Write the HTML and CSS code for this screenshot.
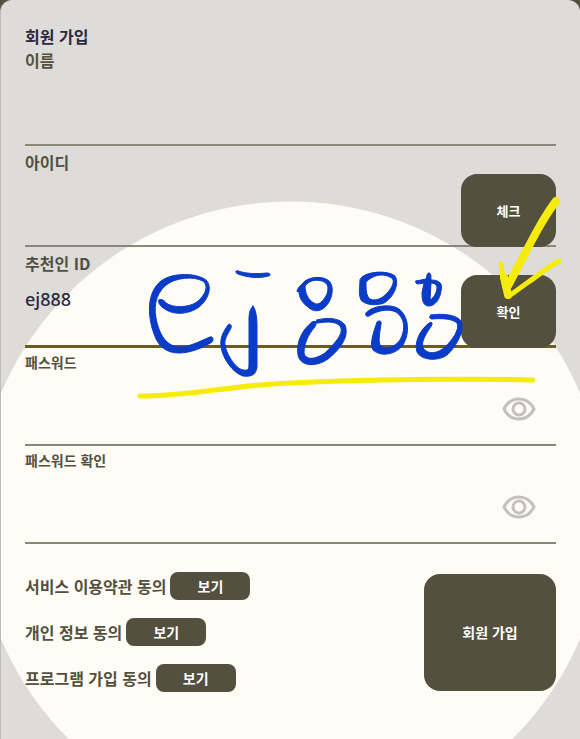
FILE: index.html
```
<!DOCTYPE html>
<html lang="ko">
<head>
  <meta charset="UTF-8">
  <meta name="viewport" content="width=device-width, initial-scale=1.0">
  <title>회원 가입</title>
  <link rel="stylesheet" href="styles.css">
</head>
<body>

<main class="signup">
  <form class="signup-form">
    <h1>회원 가입</h1>

    <div class="field">
      <label for="name">이름</label>
      <div class="control">
        <input type="text" id="name" name="name">
      </div>
    </div>

    <div class="field spaced">
      <label for="userId">아이디</label>
      <div class="control">
        <input type="text" id="userId" name="userId">
        <button type="button" class="check-btn">체크</button>
      </div>
    </div>

    <div class="field spaced active">
      <label for="referrer">추천인 ID</label>
      <div class="control">
        <input type="text" id="referrer" name="referrer" value="ej888">
        <button type="button" class="check-btn">확인</button>
      </div>
    </div>

    <div class="field small">
      <label for="password">패스워드</label>
      <div class="control">
        <input type="password" id="password" name="password">
        <button type="button" class="eye-btn" aria-label="패스워드 보기">
          <svg viewBox="0 0 34 24">
            <path d="M2 12C5 6 10 2 17 2s12 4 15 10c-3 6-8 10-15 10S5 18 2 12z"/>
            <circle cx="17" cy="12" r="6"/>
          </svg>
        </button>
      </div>
    </div>

    <div class="field small">
      <label for="passwordConfirm">패스워드 확인</label>
      <div class="control">
        <input type="password" id="passwordConfirm" name="passwordConfirm">
        <button type="button" class="eye-btn" aria-label="패스워드 확인 보기">
          <svg viewBox="0 0 34 24">
            <path d="M2 12C5 6 10 2 17 2s12 4 15 10c-3 6-8 10-15 10S5 18 2 12z"/>
            <circle cx="17" cy="12" r="6"/>
          </svg>
        </button>
      </div>
    </div>

    <div class="form-footer">
      <ul class="terms">
        <li><span>서비스 이용약관 동의</span><button type="button" class="view-btn">보기</button></li>
        <li><span>개인 정보 동의</span><button type="button" class="view-btn">보기</button></li>
        <li><span>프로그램 가입 동의</span><button type="button" class="view-btn">보기</button></li>
      </ul>
      <button type="submit" class="submit-btn">회원 가입</button>
    </div>
  </form>

  <!-- pen marks over the form -->
  <svg class="ink" viewBox="1 0 579 739" aria-hidden="true">
    <g class="blue">
      <path d="M159 300C161 298 165 301 166 303C173 308 188 308 197 302C204 296 208 289 205 283C200 277 181 276 169 283C158 290 153 303 156 318C159 334 166 346 179 347C190 347 200 341 210 337C213 336 214 340 212 342C203 348 190 353 179 353C166 353 158 346 154 334C147 315 147 292 161 281C173 272 197 273 206 280C213 287 208 300 199 307C188 315 171 316 161 306C159 304 158 302 159 300Z"/>
      <path d="M238 271C247 274 257 274 267 273C271 273 271 276 268 276C258 279 246 277 238 274C235 273 235 270 238 271Z"/>
      <path d="M253 306C256 310 257 318 257 326L257 367C256 375 251 377 243 376C233 373 222 358 221 346C220 338 223 332 228 325C230 323 232 325 231 328C228 334 224 339 225 345C227 356 237 370 244 370C249 371 249 368 249 362L249 318C249 312 251 308 253 306Z"/>
      <path d="M297 291C298 287 302 284 305 281C312 276 325 276 330 282C335 289 331 302 325 307C320 312 313 312 308 307C302 303 299 297 299 292ZM305 286C305 293 308 300 314 303C318 306 323 302 327 294C329 287 328 283 322 281C314 279 309 281 305 286Z"/>
      <path d="M317 320C328 317 340 318 345 325C350 338 338 351 328 359C315 368 300 366 298 355C296 342 302 330 312 322C316 320 318 323 314 328C308 335 304 344 304 353C306 361 316 359 325 353C334 344 343 335 341 328C339 322 329 321 318 323C315 323 315 321 317 320Z"/>
      <path d="M361 278C367 271 388 270 395 276C400 284 393 298 384 303C376 306 365 305 361 300C358 293 360 287 360 280ZM366 282C366 289 366 296 370 299C377 302 384 297 389 291C394 284 395 279 390 277C382 273 373 275 366 282Z"/>
      <path d="M366 313C371 306 391 303 399 309C409 317 410 333 403 345C395 355 381 357 373 350C369 344 374 331 377 322C379 320 382 321 381 324C380 332 378 340 380 345C385 351 395 347 400 340C405 331 406 319 396 312C388 308 376 311 369 316C366 317 365 315 366 313Z"/>
      <path d="M416 281L426 279C427 275 427 273 429 273C431 273 431 276 431 280C440 280 443 284 441 291C440 299 435 306 429 306C423 306 422 300 422 293L424 283L418 284C416 284 415 282 416 281ZM431 283L430 300C434 298 437 292 437 287C436 284 434 283 431 283Z"/>
      <path d="M431 315C443 313 457 315 461 321C465 331 456 347 447 355C437 362 421 360 417 352C414 342 420 330 429 323C433 321 433 324 430 328C425 335 421 343 423 348C428 355 438 354 446 346C453 339 460 329 457 323C453 319 443 318 432 319C429 319 429 316 431 315Z"/>
    </g>
    <g class="yellow">
      <path class="thin" d="M140 396C180 396 215 389 260 385C300 382 345 381 380 380C430 379 485 379 533 380"/>
      <path class="thick" d="M556 201C541 221 530 244 508 286"/>
      <path class="thin" d="M501 264C502 276 504 285 507 294"/>
      <path class="thick" d="M504 277L508 295"/>
      <path class="thin" d="M509 296L527 283C539 275 549 266 559 261"/>
    </g>
  </svg>
</main>

</body>
</html>
```
FILE: styles.css
```
* {
  box-sizing: border-box;
  margin: 0;
  padding: 0;
}

body {
  font-family: "Noto Sans CJK KR", sans-serif;
  background-color: #54503f;
  color: #54503f;
}

.signup {
  position: relative;
  min-height: 100vh;
  border-left: 1px solid #bdbcb9;
  border-radius: 12px 12px 0 0;
  background: radial-gradient(circle at 50% 516px, #fffcf6 314px, #dddcd9 315px);
  overflow: hidden;
}

.signup-form {
  padding: 24px;
}

h1 {
  font-size: 16px;
  line-height: 24px;
  font-weight: 700;
  color: #2b2840;
}

.field label {
  display: block;
  font-size: 16px;
  line-height: 24px;
  font-weight: 700;
}

.field.spaced label {
  padding-top: 4px;
}

.field.small label {
  padding-top: 4px;
  font-size: 14px;
  line-height: 20px;
}

.control {
  display: grid;
  grid-template-columns: 1fr auto;
  align-items: center;
}

/* the input runs under the button so its line spans the row */
.control input {
  grid-column: 1 / -1;
  grid-row: 1;
  width: 100%;
  height: 74px;
  padding-bottom: 22px;
  border: none;
  border-bottom: 2px solid #8a8679;
  background: none;
  font-family: "Noto Sans", "Noto Sans CJK KR", sans-serif;
  font-size: 18px;
  font-weight: 500;
  color: #2b2840;
  outline: none;
}

.spaced input {
  height: 73px;
}

.active input {
  border-bottom: 3px solid #6c5c22;
}

.control button {
  grid-column: 2;
  grid-row: 1;
}

button {
  border: none;
  background-color: #54503f;
  color: #fff;
  font-family: inherit;
  font-weight: 700;
  cursor: pointer;
}

.check-btn {
  width: 95px;
  height: 73px;
  border-radius: 16px;
  font-size: 13px;
}

.eye-btn {
  width: 34px;
  height: 24px;
  margin-right: 20px;
  background: none;
}

.eye-btn svg {
  display: block;
  fill: none;
  stroke: #c2c1be;
  stroke-width: 3;
}

.form-footer {
  display: flex;
  justify-content: space-between;
  align-items: center;
  padding-top: 28px;
}

.terms {
  display: grid;
  gap: 18px;
  list-style: none;
}

.terms li {
  display: flex;
  align-items: center;
  gap: 4px;
  font-size: 16px;
  line-height: 28px;
  font-weight: 700;
}

.view-btn {
  width: 80px;
  height: 28px;
  border-radius: 8px;
  font-size: 14px;
}

.submit-btn {
  width: 132px;
  height: 117px;
  border-radius: 16px;
  font-size: 14px;
}

.ink {
  position: absolute;
  top: 0;
  left: 0;
  width: 100%;
  pointer-events: none;
  stroke-linecap: round;
  stroke-linejoin: round;
}

.blue {
  fill: #0a3cc8;
  fill-rule: evenodd;
  stroke: #0a3cc8;
  stroke-width: 1;
}

.yellow {
  fill: none;
  stroke: #f5ec0c;
}

.thin {
  stroke-width: 5;
}

.thick {
  stroke-width: 8;
}
```
